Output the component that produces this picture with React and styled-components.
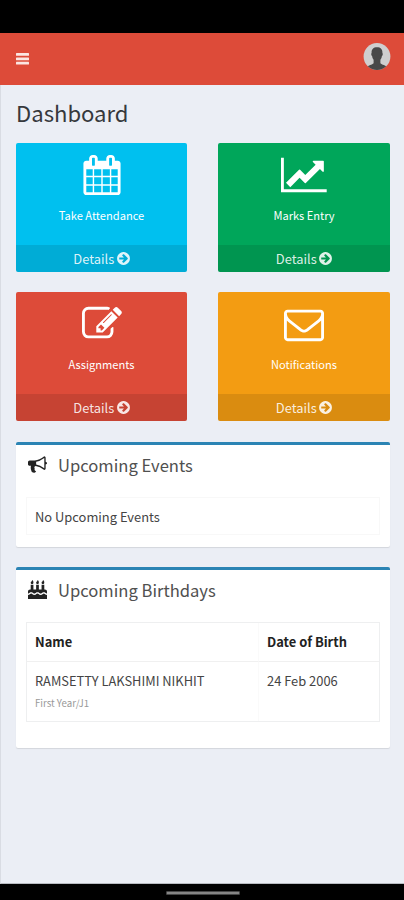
import React from "react";
import styled, { createGlobalStyle } from "styled-components";

const Global = createGlobalStyle`
  * { box-sizing: border-box; }
  body { margin: 0; background: #000; }
`;

const Screen = styled.div`
  width: 404px;
  height: 900px;
  display: flex;
  flex-direction: column;
  background: #000;
  font-family: "Noto Sans CJK JP", "Noto Sans", sans-serif;
  color: #333;
  overflow: hidden;
`;

const StatusBar = styled.div`
  height: 33px;
  flex: none;
`;

const Header = styled.header`
  height: 52px;
  flex: none;
  padding: 10px 13px 0 15px;
  display: flex;
  justify-content: space-between;
  align-items: flex-start;
  background: #dd4b39;
  color: #fff;
`;

const MenuButton = styled.button`
  border: 0;
  padding: 0;
  margin-top: 8px;
  background: none;
  color: #fbe6e2;
  display: flex;
`;

const Content = styled.main`
  height: 799px;
  flex: none;
  padding: 0 14px 0 15px;
  background: #ebeef5;
  border-left: 1px solid #d9dce3;
  border-bottom: 1px solid #b9bcc2;
`;

const Title = styled.h1`
  margin: 0;
  height: 58px;
  line-height: 55px;
  font-size: 22.1px;
  font-weight: 400;
  color: #36383c;
`;

const Tiles = styled.div`
  display: grid;
  grid-template-columns: 171px 172px;
  justify-content: space-between;
  row-gap: 20px;
`;

const TileCard = styled.section`
  height: 129px;
  border-radius: 2px;
  overflow: hidden;
  display: flex;
  flex-direction: column;
  align-items: center;
  padding-top: 12px;
  background: ${(p) => p.$color};
  color: #fff;
`;

const TileLabel = styled.div`
  margin-top: 10px;
  height: 20px;
  line-height: 20px;
  font-size: 11.1px;
  font-weight: 400;
`;

const TileFooter = styled.div`
  align-self: stretch;
  margin-top: auto;
  height: 27px;
  padding-left: 1px;
  display: flex;
  align-items: center;
  justify-content: center;
  gap: 1.5px;
  background: rgba(0, 0, 0, 0.1);
  color: rgba(255, 255, 255, 0.87);
  font-size: 12.9px;
  line-height: 26px;
`;

const Panel = styled.section`
  height: ${(p) => p.$height}px;
  margin-top: ${(p) => p.$gap}px;
  padding: 0 10px;
  border-top: 3px solid #2b84b4;
  border-radius: 2px;
  background: #fff;
  box-shadow: 0 1px 1px rgba(0, 0, 0, 0.1);
`;

const PanelHead = styled.div`
  height: 39px;
  padding-left: 2px;
  display: flex;
  align-items: center;
  gap: 11px;
  color: #222;
`;

const PanelTitle = styled.h2`
  margin: 0;
  font-size: 16.6px;
  line-height: 24px;
  font-weight: 400;
  color: #505050;
`;

const EmptyRow = styled.div`
  margin-top: 13px;
  height: 38px;
  padding-left: 8px;
  border: 1px solid #f8f8f8;
  line-height: 38px;
  font-size: 12.9px;
  color: #444;
`;

const Table = styled.div`
  margin-top: 13px;
  width: 354px;
  height: 100px;
  display: grid;
  grid-template-columns: 231px 1fr;
  grid-template-rows: 39px 1fr;
  border: 1px solid #eeeff0;
  font-size: 12.9px;
`;

const HeadCell = styled.div`
  padding-left: 8px;
  line-height: 38px;
  font-weight: 700;
  color: #222;
  border-bottom: 1px solid #f0f0f0;
  border-left: ${(p) => (p.$divided ? "1px solid #fafafa" : "0")};
`;

const Cell = styled.div`
  padding: 9px 0 0 8px;
  line-height: 20px;
  color: #444;
  border-left: ${(p) => (p.$divided ? "1px solid #fafafa" : "0")};
`;

const PersonName = styled.div`
  font-size: 12.85px;
  white-space: nowrap;
`;

const Detail = styled.div`
  margin-top: 3px;
  font-size: 9.7px;
  line-height: 18px;
  color: #999;
`;

const NavBar = styled.footer`
  flex: 1;
  display: flex;
  justify-content: center;
  padding: 7px 0 0 1px;
`;

const HomeHandle = styled.div`
  width: 74px;
  height: 4px;
  border: 1px solid #454545;
  border-radius: 1px;
  background: #858585;
`;

const Svg = styled.svg`
  display: block;
  flex: none;
  fill: currentColor;
`;

const flame =
  "q0 77-36 118.5t-92 41.5q-53 0-90.5-37.5t-37.5-90.5q0-29 9.5-51t23.5-34 31-28 31-31.5 23.5-44 9.5-67.5q38 0 83 74t45 150z";

const paths = {
  calendar:
    "M192 1664h288v-288h-288v288zm352 0h320v-288h-320v288zm-352-352h288v-320h-288v320zm352 0h320v-320h-320v320zm-352-384h288v-288h-288v288zm736 736h320v-288h-320v288zm-384-736h320v-288h-320v288zm768 736h288v-288h-288v288zm-384-352h320v-320h-320v320zm-352-864v-288q0-13-9.5-22.5t-22.5-9.5h-64q-13 0-22.5 9.5t-9.5 22.5v288q0 13 9.5 22.5t22.5 9.5h64q13 0 22.5-9.5t9.5-22.5zm736 864h288v-320h-288v320zm-384-384h320v-288h-320v288zm384 0h288v-288h-288v288zm32-480v-288q0-13-9.5-22.5t-22.5-9.5h-64q-13 0-22.5 9.5t-9.5 22.5v288q0 13 9.5 22.5t22.5 9.5h64q13 0 22.5-9.5t9.5-22.5zm384-64v1280q0 52-38 90t-90 38h-1408q-52 0-90-38t-38-90v-1280q0-52 38-90t90-38h128v-96q0-66 47-113t113-47h64q66 0 113 47t47 113v96h384v-96q0-66 47-113t113-47h64q66 0 113 47t47 113v96h128q52 0 90 38t38 90z",
  chart:
    "M2048 1536v128h-2048v-1536h128v1408h1920zm-128-1248v435q0 21-19.5 29.5t-35.5-7.5l-121-121-633 633q-10 10-23 10t-23-10l-233-233-416 416-192-192 585-585q10-10 23-10t23 10l233 233 464-464-121-121q-16-16-7.5-35.5t29.5-19.5h435q14 0 23 9t9 23z",
  edit: "M888 1184l116-116-152-152-116 116v56h96v96h56zm440-720q-16-16-33 1l-350 350q-17 17-1 33t33-1l350-350q17-17 1-33zm80 594v190q0 119-84.5 203.5t-203.5 84.5h-832q-119 0-203.5-84.5t-84.5-203.5v-832q0-119 84.5-203.5t203.5-84.5h832q63 0 117 25 15 7 18 23 3 17-9 29l-49 49q-14 14-32 8-23-6-45-6h-832q-66 0-113 47t-47 113v832q0 66 47 113t113 47h832q66 0 113-47t47-113v-126q0-13 9-22l64-64q15-15 35-7t20 29zm-96-738l288 288-672 672h-288v-288zm444 132l-92 92-288-288 92-92q28-28 68-28t68 28l152 152q28 28 28 68t-28 68z",
  envelope:
    "M1664 1504v-768q-32 36-69 66-268 206-426 338-51 43-83 67t-86.5 48.5-102.5 24.5h-2q-48 0-102.5-24.5t-86.5-48.5-83-67q-158-132-426-338-37-30-69-66v768q0 13 9.5 22.5t22.5 9.5h1472q13 0 22.5-9.5t9.5-22.5zm0-1051v-24.5l-.5-13-3-12.5-5.5-9-9-7.5-14-2.5h-1472q-13 0-22.5 9.5t-9.5 22.5q0 168 147 284 193 152 401 317 6 5 35 29.5t46 37.5 44.5 31.5 50.5 27.5 43 9h2q20 0 43-9t50.5-27.5 44.5-31.5 46-37.5 35-29.5q208-165 401-317 54-43 100.5-115.5t46.5-131.5zm128-37v1088q0 66-47 113t-113 47h-1472q-66 0-113-47t-47-113v-1088q0-66 47-113t113-47h1472q66 0 113 47t47 113z",
  arrow:
    "M1413 896q0-27-18-45l-362-362-91-91q-18-18-45-18t-45 18l-91 91q-18 18-18 45t18 45l189 189h-502q-26 0-45 19t-19 45v128q0 26 19 45t45 19h502l-189 189q-19 19-19 45t19 45l91 91q18 18 45 18t45-18l91-91 362-362q18-18 18-45zm251 0q0 209-103 385.5t-279.5 279.5-385.5 103-385.5-103-279.5-279.5-103-385.5 103-385.5 279.5-279.5 385.5-103 385.5 103 279.5 279.5 103 385.5z",
  bullhorn:
    "M1664 640q53 0 90.5 37.5t37.5 90.5-37.5 90.5-90.5 37.5v384q0 52-38 90t-90 38q-417-347-812-380-58 19-91 66t-31 100.5 40 92.5q-20 33-23 65.5t6 58 33.5 55 48 50 61.5 50.5q-29 58-111.5 83t-168.5 11.5-132-55.5q-7-23-29.5-87.5t-32-94.5-23-89-15-101 3.500-98.500 22-110.500h-122q-66 0-113-47t-47-113v-192q0-66 47-113t113-47h480q435 0 896-384 52 0 90 38t38 90v384zm-128 604v-954q-394 302-768 343v270q377 42 768 341z",
  cake: `M1792 1408v384h-1792v-384q45 0 85-14t59-27.5 47-37.5q30-27 51.5-38t56.5-11q24 0 44 7t31 15 33 27q29 25 47 38t58 27 86 14q45 0 85-14.5t58-27 48-37.5q21-19 32.5-27t31-15 43.5-7q35 0 56.5 11t51.5 38q28 24 47 37.5t59 27.5 85 14 85-14 59-27.5 47-37.5q30-27 51.5-38t56.5-11q34 0 55.5 11t51.5 38q28 24 47 37.5t59 27.5 85 14zM1792 1088v192q-24 0-44-7t-31-15-33-27q-29-25-47-38t-58-27-85-14q-46 0-86 14t-58 27-47 38q-22 19-33 27t-31 15-44 7q-35 0-56.5-11t-51.5-38q-29-25-47-38t-58-27-86-14q-45 0-85 14.5t-58 27-48 37.5q-21 19-32.5 27t-31 15-43.5 7q-35 0-56.5-11t-51.5-38q-28-24-47-37.5t-59-27.5-85-14q-46 0-86 14t-58 27-47 38q-30 27-51.5 38t-56.5 11v-192q0-80 56-136t136-56h64v-448h256v448h256v-448h256v448h256v-448h256v448h64q80 0 136 56t56 136zM512 224${flame}M1024 224${flame}M1536 224${flame}`,
};

function Icon({ name, size, wide = 1792 }) {
  return (
    <Svg
      width={(size * wide) / 1792}
      height={size}
      viewBox={`0 0 ${wide} 1792`}
      aria-hidden="true"
    >
      <path d={paths[name]} />
    </Svg>
  );
}

function MenuIcon() {
  return (
    <Svg width="15" height="16" viewBox="0 0 15 16" aria-hidden="true">
      <rect x="1" y="2" width="13" height="2.800" rx="0.500" />
      <rect x="1" y="6.400" width="13" height="2.800" rx="0.500" />
      <rect x="1" y="10.800" width="13" height="2.800" rx="0.500" />
    </Svg>
  );
}

function Avatar() {
  return (
    <Svg width="28" height="27" viewBox="0 0 28 27" role="img" aria-label="Profile">
      <clipPath id="avatar-clip">
        <circle cx="14" cy="13.5" r="13.4" />
      </clipPath>
      <g clipPath="url(#avatar-clip)">
        <rect width="28" height="27" fill="#cfcfcf" />
        <path
          fill="#484848"
          d="M14 4.300c3.900 0 5.600 2.300 5.400 5.700.7.500.4 2.700-.5 3.100-.2 1.800-.8 2.900-1.500 3.700v3.400c1.500 1.700 5.300 1.700 7 4.300V28H3.600v-3.500c1.700-2.600 5.500-2.600 7-4.300v-3.400c-.7-.8-1.300-1.900-1.500-3.700-.9-.4-1.200-2.600-.5-3.100-.2-3.400 1.500-5.700 5.400-5.700z"
        />
      </g>
    </Svg>
  );
}

const tiles = [
  { label: "Take Attendance", icon: "calendar", color: "#00c0ef" },
  { label: "Marks Entry", icon: "chart", color: "#00a65a", wide: 2048 },
  { label: "Assignments", icon: "edit", color: "#dd4b39" },
  { label: "Notifications", icon: "envelope", color: "#f39c12" },
];

function Tile({ label, icon, color, wide }) {
  return (
    <TileCard $color={color}>
      <Icon name={icon} size={40} wide={wide} />
      <TileLabel>{label}</TileLabel>
      <TileFooter>
        <span>Details</span>
        <Icon name="arrow" size={15} />
      </TileFooter>
    </TileCard>
  );
}

export default function App() {
  return (
    <Screen>
      <Global />
      <StatusBar />
      <Header>
        <MenuButton aria-label="Menu">
          <MenuIcon />
        </MenuButton>
        <Avatar />
      </Header>
      <Content>
        <Title>Dashboard</Title>
        <Tiles>
          {tiles.map((t) => (
            <Tile key={t.label} {...t} />
          ))}
        </Tiles>
        <Panel $height={105} $gap={21}>
          <PanelHead>
            <Icon name="bullhorn" size={19} />
            <PanelTitle>Upcoming Events</PanelTitle>
          </PanelHead>
          <EmptyRow>No Upcoming Events</EmptyRow>
        </Panel>
        <Panel $height={181} $gap={20}>
          <PanelHead>
            <Icon name="cake" size={19} />
            <PanelTitle>Upcoming Birthdays</PanelTitle>
          </PanelHead>
          <Table>
            <HeadCell>Name</HeadCell>
            <HeadCell $divided>Date of Birth</HeadCell>
            <Cell>
              <PersonName>RAMSETTY LAKSHIMI NIKHIT</PersonName>
              <Detail>First Year/J1</Detail>
            </Cell>
            <Cell $divided>24 Feb 2006</Cell>
          </Table>
        </Panel>
      </Content>
      <NavBar>
        <HomeHandle />
      </NavBar>
    </Screen>
  );
}
